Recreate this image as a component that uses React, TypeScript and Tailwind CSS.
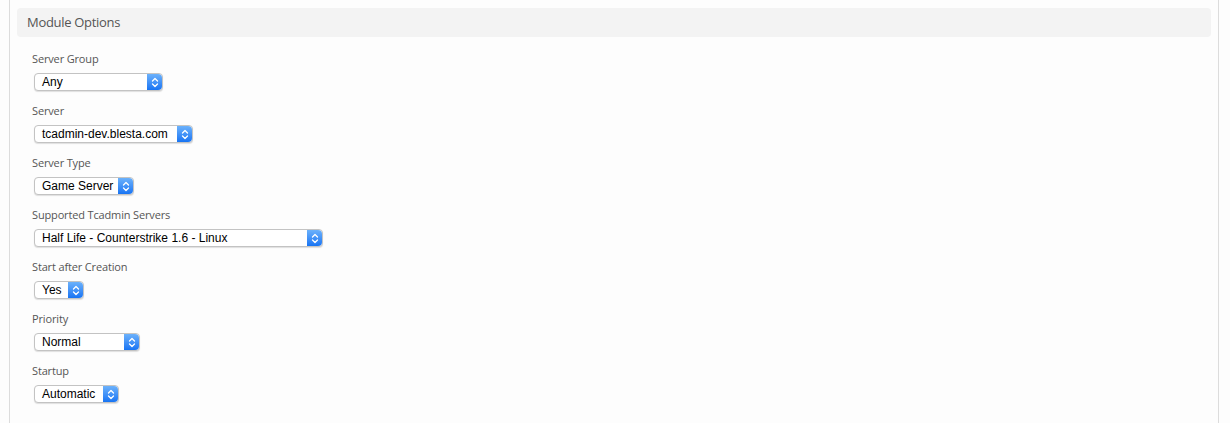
import React from 'react';

interface FieldProps {
  label: string;
  value: string;
  width: string;
}

const fields: FieldProps[] = [
  { label: 'Server Group', value: 'Any', width: 'w-[129px]' },
  { label: 'Server', value: 'tcadmin-dev.blesta.com', width: 'w-[159px]' },
  { label: 'Server Type', value: 'Game Server', width: 'w-[100px]' },
  { label: 'Supported Tcadmin Servers', value: 'Half Life - Counterstrike 1.6 - Linux', width: 'w-[289px]' },
  { label: 'Start after Creation', value: 'Yes', width: 'w-[50px]' },
  { label: 'Priority', value: 'Normal', width: 'w-[106px]' },
  { label: 'Startup', value: 'Automatic', width: 'w-[85px]' },
];

const Stepper = () => (
  <div className="flex h-full w-[15px] items-center justify-center rounded-r-[4px] bg-gradient-to-b from-[#6bb1fb] to-[#1674f3]">
    <svg width="8" height="11" viewBox="0 0 8 11" fill="none">
      <path d="M1.5 4L4 1.5L6.5 4" stroke="white" strokeWidth="1.3" strokeLinecap="round" strokeLinejoin="round" />
      <path d="M1.5 7L4 9.5L6.5 7" stroke="white" strokeWidth="1.3" strokeLinecap="round" strokeLinejoin="round" />
    </svg>
  </div>
);

const FakeSelect: React.FC<{ value: string; width: string }> = ({ value, width }) => (
  <div
    className={`${width} ml-[2px] flex h-[18px] items-stretch rounded-[4px] border border-[#c3c3c3] bg-white shadow-[0_1px_1px_rgba(0,0,0,0.12)]`}
  >
    <div className="flex flex-1 items-center pl-[7px] font-['Liberation_Sans',Arial,sans-serif] text-[12px] leading-none text-black">
      {value}
    </div>
    <Stepper />
  </div>
);

export default function App() {
  return (
    <div className="h-[423px] w-[1230px] overflow-hidden bg-[#fdfdfd] font-['Open_Sans',sans-serif]">
      <div className="ml-[9px] h-full w-[1210px] border-x border-[#dcdcdc] px-[7px] pt-[8px]">
        {/* Header */}
        <div className="flex h-[29px] items-center rounded-[4px] bg-[#f3f3f3] pl-[10px] text-[13px] tracking-[-0.3px] text-[#555]">
          Module Options
        </div>

        {/* Fields */}
        <div className="mt-[14px] flex flex-col gap-[12px] pl-[15px]">
          {fields.map((field) => (
            <div key={field.label} className="flex flex-col gap-[6px]">
              <label className="h-[16px] text-[11px] leading-[16px] tracking-[-0.15px] text-[#555]">{field.label}</label>
              <FakeSelect value={field.value} width={field.width} />
            </div>
          ))}
        </div>
      </div>
    </div>
  );
}
